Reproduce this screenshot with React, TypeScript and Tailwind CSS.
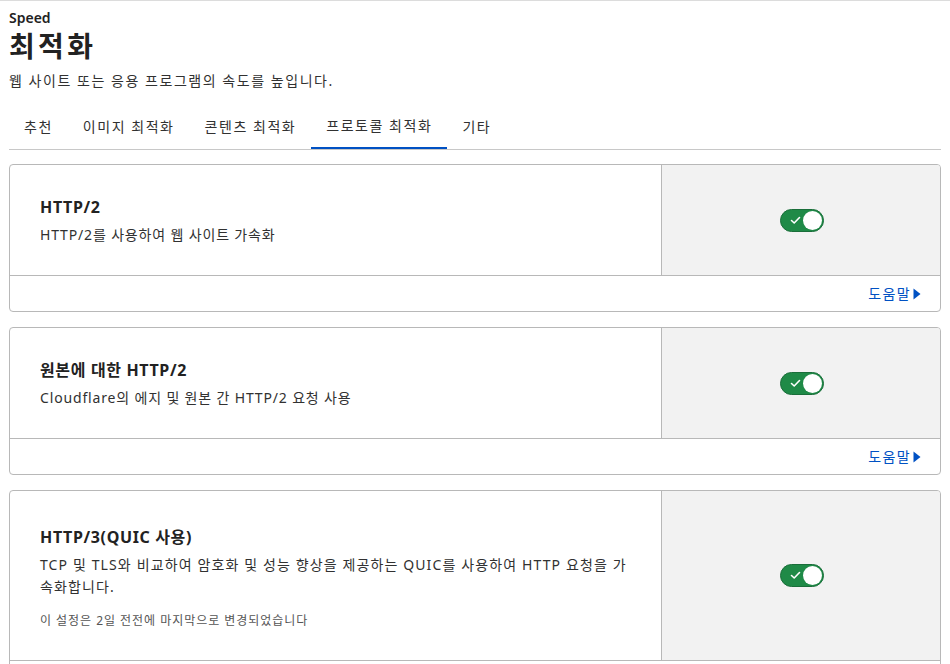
import React from "react";

const font = { fontFamily: '"Noto Sans", "Noto Sans CJK KR", sans-serif' };

function Toggle() {
  return (
    <div className="relative w-[44px] h-[23px] rounded-full bg-[#1f8a47] border border-[#1a6e3a]">
      <svg className="absolute left-[9px] top-[6px]" width="11" height="9" viewBox="0 0 11 9">
        <path d="M1.5 4.5 L4.2 7 L9.5 1.5" fill="none" stroke="white" strokeWidth="1.6" strokeLinecap="round" strokeLinejoin="round" />
      </svg>
      <div className="absolute right-[1px] top-[1px] w-[19px] h-[19px] rounded-full bg-white" />
    </div>
  );
}

function Card({ title, desc, note, footer = true }: { title: string; desc: string; note?: string; footer?: boolean }) {
  return (
    <div className="border border-[#b8b8b8] rounded-[4px] bg-white overflow-hidden">
      <div className="flex">
        <div className={`w-[652px] border-r border-[#b8b8b8] pl-[30px] pr-[28px] flex flex-col justify-center ${note ? "pt-[34px] pb-[30px]" : "min-h-[110px]"}`}>
          <div className="text-[16px] font-bold text-[#222] leading-[24px] tracking-[0.04em]">{title}</div>
          <div className={`text-[14px] text-[#313131] leading-[22px] mt-[5px] ${note ? "tracking-[0.08em]" : "tracking-[0.06em]"}`}>{desc}</div>
          {note && <div className="text-[12px] text-[#555] leading-[18px] mt-[14px] tracking-[0.08em]">{note}</div>}
        </div>
        <div className="flex-1 bg-[#f2f2f2] flex items-center justify-center">
          <div className="ml-[2px]"><Toggle /></div>
        </div>
      </div>
      {footer && (
        <div className="border-t border-[#b8b8b8] h-[36px] flex items-center justify-end pr-[19px]">
          <span className="text-[14px] text-[#0051c3] leading-[20px] tracking-[0.1em]">도움말</span>
          <svg className="ml-[2px]" width="8" height="12" viewBox="0 0 8 12">
            <path d="M0.5 0.5 L7.5 6 L0.5 11.5 Z" fill="#0051c3" />
          </svg>
        </div>
      )}
    </div>
  );
}

export default function App() {
  const tabs = ["추천", "이미지 최적화", "콘텐츠 최적화", "프로토콜 최적화", "기타"];
  return (
    <div style={font} className="w-[950px] h-[664px] overflow-hidden bg-white border-t border-[#dcdcdc]">
      <div className="px-[9px]">
        <div className="pt-[8px] text-[14px] font-semibold text-[#222] leading-[18px]">Speed</div>
        <div className="text-[28px] font-bold text-[#222] leading-[38px] tracking-[0.12em]">최적화</div>
        <div className="text-[14px] text-[#313131] leading-[20px] mt-[6px] tracking-[0.11em]">웹 사이트 또는 응용 프로그램의 속도를 높입니다.</div>
        <div className="flex mt-[18px] border-b border-[#c8c8c8]">
          {tabs.map((t, i) => (
            <div
              key={t}
              className={`px-[15px] h-[40px] pb-[6px] flex items-center text-[14px] text-[#313131] tracking-[0.11em] ${i === 3 ? "border-b-2 border-[#0051c3] -mb-[1px]" : ""}`}
            >
              {t}
            </div>
          ))}
        </div>
        <div className="flex flex-col gap-[15px] mt-[14px]">
          <Card title="HTTP/2" desc="HTTP/2를 사용하여 웹 사이트 가속화" />
          <Card title="원본에 대한 HTTP/2" desc="Cloudflare의 에지 및 원본 간 HTTP/2 요청 사용" />
          <Card
            title="HTTP/3(QUIC 사용)"
            desc="TCP 및 TLS와 비교하여 암호화 및 성능 향상을 제공하는 QUIC를 사용하여 HTTP 요청을 가속화합니다."
            note="이 설정은 2일 전전에 마지막으로 변경되었습니다"
          />
        </div>
      </div>
    </div>
  );
}
